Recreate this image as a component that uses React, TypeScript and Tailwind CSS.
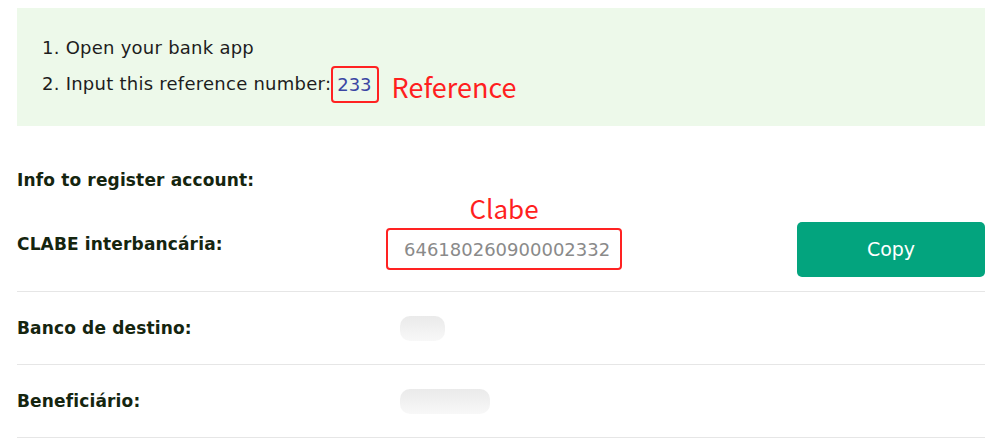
import React from "react";

const font = { fontFamily: "'DejaVu Sans', Inter, sans-serif" };
const cjk = { fontFamily: "'Noto Sans CJK SC', 'Noto Sans', sans-serif" };

function Blob({ w }: { w: number }) {
  return (
    <div
      className="h-[25px] rounded-[10px] bg-gradient-to-b from-[#eaeaea] to-[#f8f8f8] ml-[14px] blur-[0.5px]"
      style={{ width: w }}
    />
  );
}

export default function App() {
  return (
    <div
      className="w-[1007px] h-[439px] bg-white pl-[17px] pr-[22px] pt-[8px] overflow-hidden"
      style={font}
    >
      <div className="h-[118px] bg-[#edf9ea] pl-[25px] pt-[22px] text-[18px] tracking-[0.25px] text-[#1d1d1d]">
        <div className="leading-[36px] h-[36px]">1. Open your bank app</div>
        <div className="leading-[36px] h-[36px] flex items-center">
          <span>2. Input this reference number:</span>
          <span className="inline-block h-[37px] leading-[33px] border-2 border-[#f22] rounded-[4px] pl-[4px] pr-[5px] tracking-normal text-[#3b46a3]">
            233
          </span>
          <span className="ml-[13px] mt-[6px] text-[27px] tracking-normal text-[#ff1f1f]" style={cjk}>
            Reference
          </span>
        </div>
      </div>

      <div className="mt-[44px] text-[17px] leading-[20px] font-bold tracking-[0.15px] text-[#15250f]">
        Info to register account:
      </div>

      <div className="mt-[32px] flex items-start pb-[14px] border-b border-[#e6e6e6]">
        <div className="w-[369px] mt-[12px] text-[17px] leading-[20px] font-bold tracking-[0.15px] text-[#15250f]">
          CLABE interbancária:
        </div>
        <div className="relative mt-[6px]">
          <span
            className="absolute left-1/2 -translate-x-1/2 -top-[40px] text-[26px] text-[#ff1f1f] whitespace-nowrap"
            style={cjk}
          >
            Clabe
          </span>
          <div className="w-[236px] h-[42px] border-2 border-[#f22] rounded-[4px] pl-[16px] flex items-center text-[18px] text-[#8a8a8a]">
            646180260900002332
          </div>
        </div>
        <div className="flex-1" />
        <button className="w-[188px] h-[55px] rounded-[5px] bg-[#03a47e] text-white text-[19px]">
          Copy
        </button>
      </div>

      <div className="h-[73px] flex items-center border-b border-[#e6e6e6]">
        <div className="w-[369px] text-[17px] leading-[20px] font-bold tracking-[0.15px] text-[#15250f]">
          Banco de destino:
        </div>
        <Blob w={45} />
      </div>
      <div className="h-[73px] flex items-center border-b border-[#e6e6e6]">
        <div className="w-[369px] text-[17px] leading-[20px] font-bold tracking-[0.15px] text-[#15250f]">
          Beneficiário:
        </div>
        <Blob w={90} />
      </div>
    </div>
  );
}
